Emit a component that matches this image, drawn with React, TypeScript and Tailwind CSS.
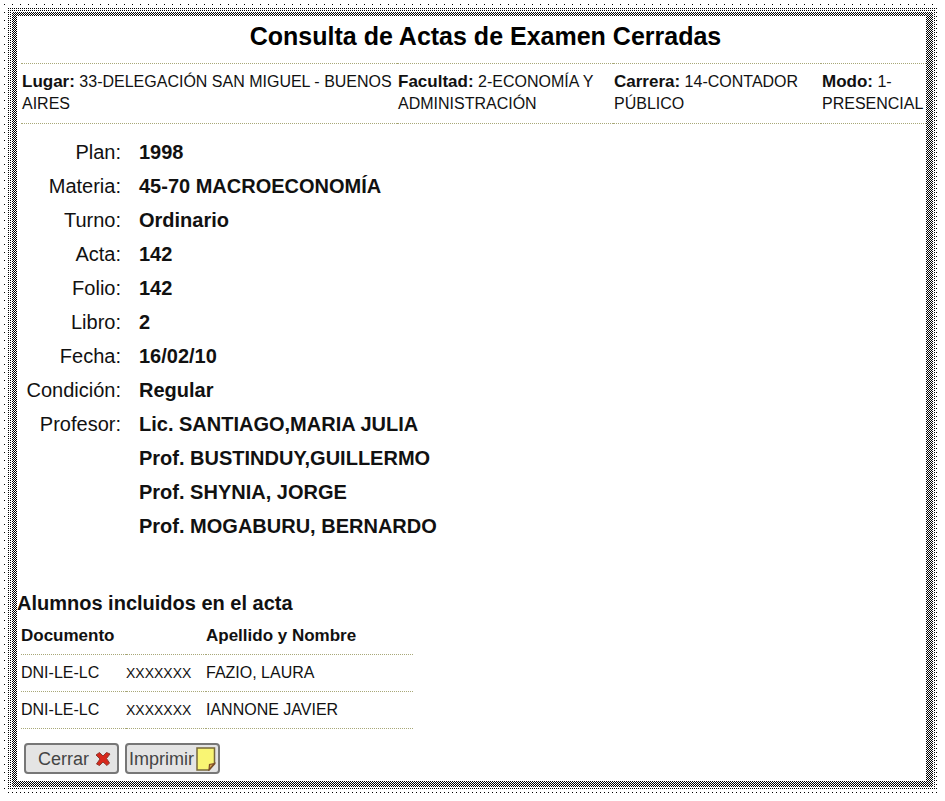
const cabecera = [
  { label: "Lugar:", value: "33-DELEGACIÓN SAN MIGUEL - BUENOS AIRES", width: "w-[376px]" },
  { label: "Facultad:", value: "2-ECONOMÍA Y ADMINISTRACIÓN", width: "w-[216px]" },
  { label: "Carrera:", value: "14-CONTADOR PÚBLICO", width: "w-[208px]" },
  { label: "Modo:", value: "1-PRESENCIAL", width: "" },
];

const datos = [
  { label: "Plan:", values: ["1998"] },
  { label: "Materia:", values: ["45-70 MACROECONOMÍA"] },
  { label: "Turno:", values: ["Ordinario"] },
  { label: "Acta:", values: ["142"] },
  { label: "Folio:", values: ["142"] },
  { label: "Libro:", values: ["2"] },
  { label: "Fecha:", values: ["16/02/10"] },
  { label: "Condición:", values: ["Regular"] },
  {
    label: "Profesor:",
    values: [
      "Lic. SANTIAGO,MARIA JULIA",
      "Prof. BUSTINDUY,GUILLERMO",
      "Prof. SHYNIA, JORGE",
      "Prof. MOGABURU, BERNARDO",
    ],
  },
];

const alumnos = [
  { tipo: "DNI-LE-LC", numero: "XXXXXXX", nombre: "FAZIO, LAURA" },
  { tipo: "DNI-LE-LC", numero: "XXXXXXX", nombre: "IANNONE JAVIER" },
];

function CloseIcon() {
  return (
    <svg width="16" height="16" viewBox="0 0 16 16" aria-hidden="true">
      <path
        d="M1 4 4.500 1.500 8 5 11.500 1.500 15 3 11.500 7.500 14.500 12 12 14.500 8 11 4.500 14.500 1.500 13 5 8Z"
        fill="#d8281c"
        stroke="#8a3a30"
        strokeWidth="1"
      />
    </svg>
  );
}

function NoteIcon() {
  return (
    <svg width="20" height="24" viewBox="0 0 20 24" aria-hidden="true">
      <path d="M1 1H18.500V17L13 23H1Z" fill="#f9f573" stroke="#77683a" strokeWidth="1.500" />
      <path d="M18.500 16.500 13.500 17.500 13 23Z" fill="#d6a24a" stroke="#7a4a28" strokeWidth="1.200" />
    </svg>
  );
}

// Halftone shadow: nested rings, from sparse dots to a checkerboard
function Frame({ children }: { children: React.ReactNode }) {
  return (
    <div className="bg-white pt-1 pr-[5px] pb-2 pl-1">
      <div className="bg-[conic-gradient(from_270deg_at_1px_1px,#000_90deg,transparent_0)] bg-[length:8px_8px] pt-1 pl-1">
        <div className="bg-white">
          <div className="bg-[conic-gradient(from_270deg_at_1px_1px,#000_90deg,transparent_0)] bg-[length:4px_4px] pr-1 pb-[3px]">
            <div className="bg-white">
              <div className="bg-[conic-gradient(from_270deg_at_1px_1px,#000_90deg,transparent_0)] bg-[length:2px_2px] pt-1 pr-[3px] pb-[3px] pl-1">
                <div className="bg-[conic-gradient(#000_25%,#fff_0_50%,#000_0_75%,#fff_0)] bg-[length:2px_2px] pt-1 pr-[7px] pb-1.5 pl-[5px]">
                  <div className="bg-white">{children}</div>
                </div>
              </div>
            </div>
          </div>
        </div>
      </div>
    </div>
  );
}

export default function App() {
  return (
    <Frame>
      <main className="font-['Liberation_Sans',Arial,sans-serif] text-[#111] pt-[5px] pb-[7px]">
        <h1 className="pl-7 text-center text-[25px] leading-[30px] font-bold text-black">
          Consulta de Actas de Examen Cerradas
        </h1>

        <div className="pl-1 mt-3">
          <table className="w-full table-fixed text-base leading-[22px]">
            <tbody>
              <tr className="border-y border-dotted border-[#a8a878]">
                {cabecera.map((c) => (
                  <td key={c.label} className={`${c.width} align-top pt-[7px] pb-2 pl-px`}>
                    <b className="text-[17px] leading-5">{c.label}</b> {c.value}
                  </td>
                ))}
              </tr>
            </tbody>
          </table>
        </div>

        <dl className="mt-[11px] text-xl leading-[34px]">
          {datos.map((d) => (
            <div key={d.label} className="flex">
              <dt className="w-[104px] shrink-0 text-right">{d.label}</dt>
              <dd className="ml-[18px] font-bold">
                {d.values.map((v) => (
                  <div key={v}>{v}</div>
                ))}
              </dd>
            </div>
          ))}
        </dl>

        <h2 className="mt-12 text-xl leading-6 font-bold">Alumnos incluidos en el acta</h2>
        <table className="ml-1 mt-1 w-[392px] text-base leading-5 text-left">
          <thead className="text-[17px]">
            <tr className="border-b border-dotted border-[#a8a878]">
              <th colSpan={2} className="pt-[7px] pb-2">Documento</th>
              <th className="pt-[7px] pb-2">Apellido y Nombre</th>
            </tr>
          </thead>
          <tbody>
            {alumnos.map((a) => (
              <tr key={a.nombre} className="border-b border-dotted border-[#a8a878]">
                <td className="w-[105px] py-2">{a.tipo}</td>
                <td className="w-20 py-2 text-sm">{a.numero}</td>
                <td className="py-2">{a.nombre}</td>
              </tr>
            ))}
          </tbody>
        </table>

        <div className="flex gap-1.5 mt-3.5 ml-[7px] text-lg text-[#444]">
          <button
            type="button"
            className="flex h-[31px] w-[95px] items-center justify-end gap-1.5 rounded-sm border-2 border-[#777] bg-[#e4e4e4] pr-1.5"
          >
            Cerrar <CloseIcon />
          </button>
          <button
            type="button"
            className="flex h-[31px] w-[95px] items-center justify-between rounded-sm border-2 border-[#777] bg-[#e4e4e4] px-0.5"
          >
            Imprimir <NoteIcon />
          </button>
        </div>
      </main>
    </Frame>
  );
}
